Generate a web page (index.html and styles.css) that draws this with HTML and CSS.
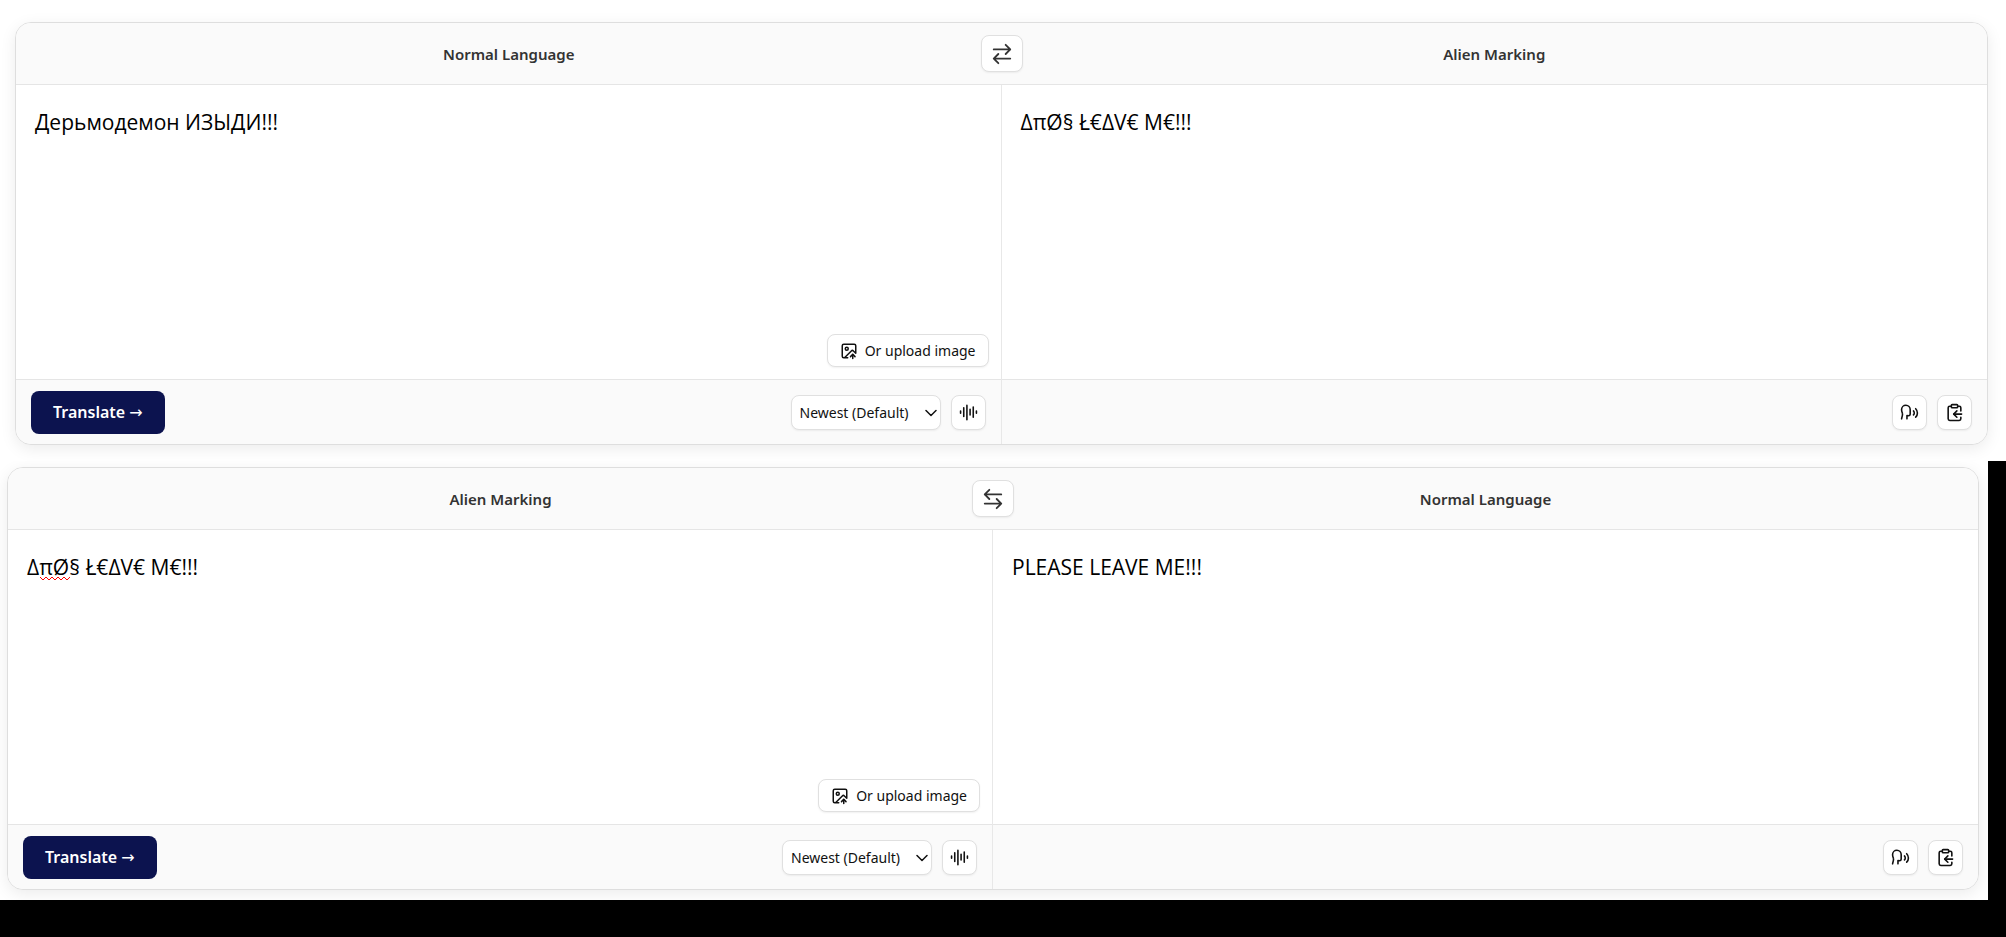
FILE: index.html
```html
<!doctype html>
<html lang="en">
<head>
  <title>Alien Marking translator</title>
  <meta charset="utf-8">
  <link rel="stylesheet" href="styles.css">
</head>
<body>

<!-- shared icons -->
<svg class="sprite" aria-hidden="true">
  <symbol id="iconImage" viewBox="0 0 24 24">
    <path d="M10.3 21H5a2 2 0 0 1-2-2V5a2 2 0 0 1 2-2h14a2 2 0 0 1 2 2v10l-3.100-3.100a2 2 0 0 0-2.814.014L6 21"/>
    <path d="m14 19.500 3-3 3 3"/>
    <path d="M17 22v-5.500"/>
    <circle cx="9" cy="9" r="2"/>
  </symbol>
  <symbol id="iconWave" viewBox="0 0 24 24">
    <path d="M2 10v3M6 6v11M10 3v18M14 8v7M18 5v13M22 10v3"/>
  </symbol>
  <symbol id="iconSpeech" viewBox="0 0 24 24">
    <path d="M8.800 20v-4.100l1.900.2a2.300 2.300 0 0 0 2.164-2.100V8.300A5.370 5.370 0 0 0 2 8.250c0 2.800.656 3.054 1 4.550a5.770 5.770 0 0 1 .029 2.758L2 20"/>
    <path d="M19.800 17.800a7.500 7.500 0 0 0 .003-10.603"/>
    <path d="M17 15a3.500 3.500 0 0 0-.025-4.975"/>
  </symbol>
  <symbol id="iconCopy" viewBox="0 0 24 24">
    <rect x="8" y="2" width="8" height="4" rx="1"/>
    <path d="M8 4H6a2 2 0 0 0-2 2v14a2 2 0 0 0 2 2h12a2 2 0 0 0 2-2v-2"/>
    <path d="M16 4h2a2 2 0 0 1 2 2v4"/>
    <path d="M21 14H11"/>
    <path d="m15 10-4 4 4 4"/>
  </symbol>
</svg>

<main class="page">
  <section class="shot shotTop">
    <form class="card">
      <header class="cardHeader">
        <label class="language" for="sourceText1">Normal Language</label>
        <h2 class="language">Alien Marking</h2>
        <button class="swapButton" type="button" aria-label="Swap languages">
          <svg viewBox="0 0 24 24"><path d="M3 7h18M16 2l5 5-5 5M21 17H3M8 12l-5 5 5 5"/></svg>
        </button>
      </header>

      <div class="panel panelSource">
        <div class="inputArea">
          <textarea class="sourceText" id="sourceText1" spellcheck="false">Дерьмодемон ИЗЫДИ!!!</textarea>
          <button class="uploadButton" type="button"><svg><use href="#iconImage"/></svg>Or upload image</button>
        </div>
        <footer class="cardFooter">
          <button class="translateButton" type="button">Translate <span class="arrow">→</span></button>
          <div class="tools">
            <div class="modelBox">
              <select class="modelSelect" aria-label="Model">
                <option>Newest (Default)</option>
              </select>
              <svg class="chevron" viewBox="0 0 24 16" aria-hidden="true"><path d="M2 3l10 10L22 3"/></svg>
            </div>
            <button class="iconButton" type="button" aria-label="Record audio"><svg><use href="#iconWave"/></svg></button>
          </div>
        </footer>
      </div>

      <div class="panel panelResult">
        <output class="resultText" for="sourceText1">ΔπØ§ Ł€ΔV€ M€!!!</output>
        <footer class="cardFooter">
          <div class="tools">
            <button class="iconButton" type="button" aria-label="Speak"><svg><use href="#iconSpeech"/></svg></button>
            <button class="iconButton" type="button" aria-label="Copy"><svg><use href="#iconCopy"/></svg></button>
          </div>
        </footer>
      </div>
    </form>
  </section>

  <section class="shot shotBottom">
    <form class="card">
      <header class="cardHeader">
        <label class="language" for="sourceText2">Alien Marking</label>
        <h2 class="language">Normal Language</h2>
        <button class="swapButton" type="button" aria-label="Swap languages">
          <svg viewBox="0 0 24 24"><path d="M21 7H3M8 2L3 7l5 5M3 17h18M16 12l5 5-5 5"/></svg>
        </button>
      </header>

      <div class="panel panelSource">
        <div class="inputArea">
          <textarea class="sourceText" id="sourceText2" spellcheck="false">ΔπØ§ Ł€ΔV€ M€!!!</textarea>
          <svg class="spellingMark" viewBox="0 0 30 5" aria-hidden="true"><path d="M0 1l3 3 3-3 3 3 3-3 3 3 3-3 3 3 3-3 3 3 3-3"/></svg>
          <button class="uploadButton" type="button"><svg><use href="#iconImage"/></svg>Or upload image</button>
        </div>
        <footer class="cardFooter">
          <button class="translateButton" type="button">Translate <span class="arrow">→</span></button>
          <div class="tools">
            <div class="modelBox">
              <select class="modelSelect" aria-label="Model">
                <option>Newest (Default)</option>
              </select>
              <svg class="chevron" viewBox="0 0 24 16" aria-hidden="true"><path d="M2 3l10 10L22 3"/></svg>
            </div>
            <button class="iconButton" type="button" aria-label="Record audio"><svg><use href="#iconWave"/></svg></button>
          </div>
        </footer>
      </div>

      <div class="panel panelResult">
        <output class="resultText" for="sourceText2">PLEASE LEAVE ME!!!</output>
        <footer class="cardFooter">
          <div class="tools">
            <button class="iconButton" type="button" aria-label="Speak"><svg><use href="#iconSpeech"/></svg></button>
            <button class="iconButton" type="button" aria-label="Copy"><svg><use href="#iconCopy"/></svg></button>
          </div>
        </footer>
      </div>
    </form>
  </section>
</main>

</body>
</html>
```
FILE: styles.css
```css
* {
  box-sizing: border-box;
}

body {
  margin: 0;
  background: black;
  color: #111;
  font-family: "Segoe UI", "Noto Sans", sans-serif;
}

button, select, textarea {
  margin: 0;
  color: inherit;
  font-family: inherit;
}

svg {
  fill: none;
  stroke: currentColor;
  stroke-width: 2;
  stroke-linecap: round;
  stroke-linejoin: round;
}

.sprite {
  display: none;
}

.shot {
  overflow: hidden;
  background: white;
}

.shotTop {
  padding: 22px 18px 16px 15px;
}

.shotBottom {
  margin-right: 18px;
  padding: 6px 9px 10px 7px;
}

.card {
  display: grid;
  grid-template-columns: 1fr 1fr;
  border: 1px solid #dedede;
  border-radius: 16px;
  background: white;
  box-shadow: 0 4px 16px rgba(0, 0, 0, 0.08);
}

.cardHeader {
  position: relative;
  grid-column: 1 / -1;
  display: grid;
  grid-template-columns: 1fr 1fr;
  align-items: center;
  height: 62px;
  border-bottom: 1px solid #e5e5e5;
  border-radius: 15px 15px 0 0;
  background: #fafafa;
}

.language {
  margin: 0;
  color: #333;
  font-size: 15px;
  font-weight: 600;
  line-height: 20px;
  text-align: center;
}

.swapButton, .uploadButton, .modelSelect, .iconButton {
  border: 1px solid #e0e0e0;
  border-radius: 8px;
  background: white;
  box-shadow: 0 1px 2px rgba(0, 0, 0, 0.06);
}

.swapButton {
  position: absolute;
  top: 12px;
  left: 50%;
  display: grid;
  place-items: center;
  width: 42px;
  height: 37px;
  padding: 0;
  color: #333;
  transform: translateX(-50%);
}

.swapButton svg {
  width: 22px;
  height: 22px;
}

.panel {
  display: flex;
  flex-direction: column;
}

.panelSource {
  border-right: 1px solid #e8e8e8;
}

.inputArea {
  position: relative;
  height: 294px;
}

.sourceText {
  display: block;
  width: 100%;
  height: 100%;
  border: 0;
  border-radius: 0;
  outline: 0;
  background: transparent;
  resize: none;
}

.sourceText, .resultText {
  padding: 22px 19px;
  color: black;
  font-family: "Segoe UI", "Open Sans", "Noto Sans", sans-serif;
  font-size: 21px;
  line-height: 30px;
}

.resultText {
  flex: 1;
}

.spellingMark {
  position: absolute;
  top: 46px;
  left: 32px;
  width: 30px;
  height: 5px;
  stroke: red;
  stroke-width: 1;
}

.uploadButton {
  position: absolute;
  right: 12px;
  bottom: 12px;
  display: flex;
  align-items: center;
  gap: 7px;
  height: 33px;
  padding: 0 12px;
  font-size: 14px;
}

.uploadButton svg {
  width: 18px;
  height: 18px;
}

.cardFooter {
  display: flex;
  align-items: center;
  height: 65px;
  padding: 0 15px;
  border-top: 1px solid #e5e5e5;
  background: #fafafa;
}

.panelSource .cardFooter {
  border-bottom-left-radius: 15px;
}

.panelResult .cardFooter {
  border-bottom-right-radius: 15px;
}

.translateButton {
  height: 43px;
  padding: 0 22px;
  border: 0;
  border-radius: 8px;
  background: #0c134f;
  color: white;
  font-size: 16px;
  font-weight: 600;
}

.arrow {
  font-family: "Segoe UI", "DejaVu Sans", sans-serif;
  font-weight: 400;
}

.tools {
  display: flex;
  gap: 10px;
  margin-left: auto;
}

.modelBox {
  position: relative;
}

.modelSelect {
  display: block;
  width: 150px;
  height: 35px;
  padding: 0 8px;
  appearance: none;
  font-size: 14px;
}

.chevron {
  position: absolute;
  top: 14px;
  right: 4px;
  width: 12px;
  height: 8px;
  stroke-width: 3;
  pointer-events: none;
}

.iconButton {
  display: grid;
  place-items: center;
  width: 35px;
  height: 35px;
  padding: 0;
}

.iconButton svg {
  width: 19px;
  height: 19px;
}
```
